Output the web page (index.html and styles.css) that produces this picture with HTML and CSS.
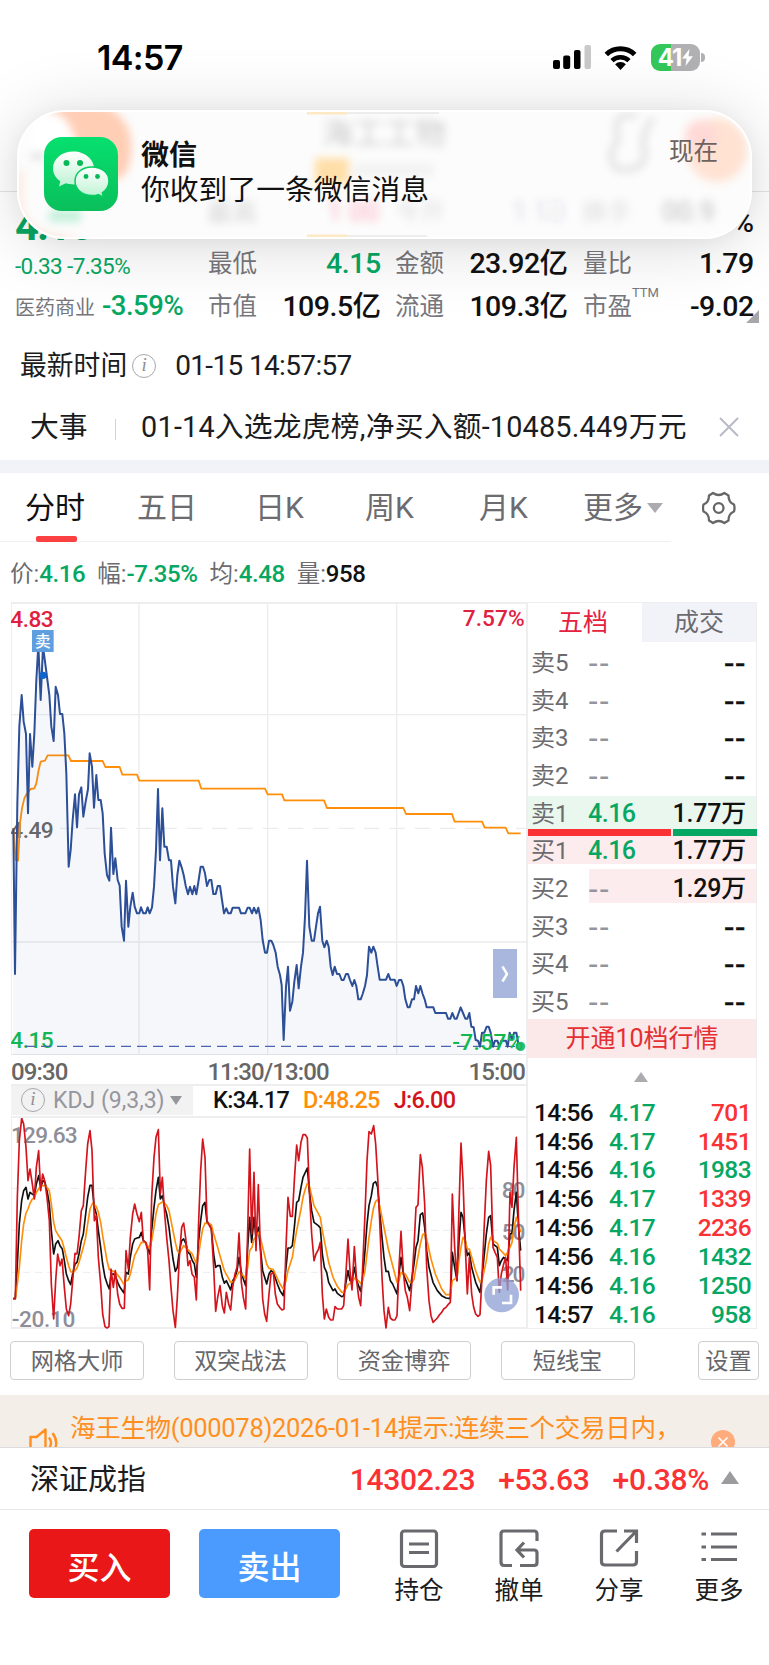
FILE: index.html
```html
<!DOCTYPE html>
<html lang="zh-CN">
    <head>
        <meta charset="UTF-8">
        <meta name="viewport" content="width=device-width, initial-scale=1.0">
        <title>海王生物 000078</title>
        <link rel="stylesheet" href="styles.css">
    </head>
    <body>
        <div class="maindiv">
            <div class="statusbar">
                <span class="clock">14:57</span>
                <svg class="signal" width="40" height="26" viewBox="0 0 40 26">
                    <rect x="1" y="16" width="7" height="9" rx="2"/>
                    <rect x="11.200" y="11.500" width="7" height="13.500" rx="2"/>
                    <rect x="22" y="6" width="6.500" height="19" rx="2"/>
                    <rect x="32.500" y="1" width="6.500" height="24" rx="2" fill="#c9c9c9"/>
                </svg>
                <svg class="wifi" width="33" height="25" viewBox="0 0 33 25">
                    <path d="M2.300 9.500a20.500 20.500 0 0 1 28.400 0" fill="none" stroke="#000" stroke-width="5"/>
                    <path d="M8 15.600a12.300 12.300 0 0 1 17 0" fill="none" stroke="#000" stroke-width="4.600"/>
                    <path d="M16.500 25l-5.400-5.700a7.700 7.700 0 0 1 10.800 0z"/>
                </svg>
                <div class="battery">
                    <span>41</span>
                    <svg width="11" height="17" viewBox="0 0 11 17"><path d="M7.500 0L0 9.500h4.600L3.500 17 11 7.300H6.500z" fill="#fff"/></svg>
                </div>
            </div>
            <div class="titlebar"></div>

            <div class="quote">
                <div class="price">4.16</div>
                <div class="cell"></div>
                <div class="cell"></div>
                <div class="cell last"><b>%</b></div>

                <div class="change">-0.33 -7.35%</div>
                <div class="cell"><label>最低</label><b class="green">4.15</b></div>
                <div class="cell"><label>金额</label><b>23.92亿</b></div>
                <div class="cell"><label>量比</label><b>1.79</b></div>

                <div class="sector">医药商业<b>-3.59%</b></div>
                <div class="cell"><label>市值</label><b>109.5亿</b></div>
                <div class="cell"><label>流通</label><b>109.3亿</b></div>
                <div class="cell"><label>市盈<sup>TTM</sup></label><b>-9.02</b></div>
                <i class="corner"></i>
            </div>

            <div class="timerow">
                <span>最新时间</span>
                <i class="info">i</i>
                <span class="stamp">01-15 14:57:57</span>
            </div>

            <div class="newsrow">
                <span>大事</span>
                <i class="bar"></i>
                <span class="newstext">01-14入选龙虎榜,净买入额-10485.449万元</span>
                <svg width="20" height="20" viewBox="0 0 20 20"><path d="M1 1l18 18M19 1L1 19" stroke="#b9bac8" stroke-width="2"/></svg>
            </div>

            <div class="tabs">
                <span class="tab active">分时</span>
                <span class="tab">五日</span>
                <span class="tab">日K</span>
                <span class="tab">周K</span>
                <span class="tab">月K</span>
                <span class="tab more">更多<i class="down"></i></span>
                <svg class="gear" width="34" height="34" viewBox="0 0 34 34" fill="none" stroke="#666" stroke-width="2.300" stroke-linejoin="round">
                    <path d="M11 2Q16.700 6 22.400 2L26.500 4.500Q26.500 11.500 32 13.500Q33 17 32 20.500Q26.500 22.500 26.500 29.500L22.400 32Q16.700 28 11 32L7 29.500Q7 22.500 1.500 20.500Q.5 17 1.500 13.500Q7 11.500 7 4.500Z"/>
                    <circle cx="16.700" cy="17" r="4.800"/>
                </svg>
            </div>

            <div class="legend">
                <span>价:<b>4.16</b></span>
                <span>幅:<b>-7.35%</b></span>
                <span>均:<b>4.48</b></span>
                <span>量:<b class="black">958</b></span>
            </div>

            <div class="board">
                <div class="charts">
                    <div class="pricechart">
                        <svg width="515" height="453" viewBox="33 36 1545 1359">
                            <g stroke="#ececee" stroke-width="4">
                                <path d="M33 374H1578M33 1056H1578M417 36V1395M803 36V1395M1190 36V1395"/>
                                <path d="M180 715H1578" stroke-dasharray="46 30"/>
                            </g>
                            <g class="axis">
                                <text x="31" y="112" fill="#e0203f" textLength="130">4.83</text>
                                <text x="1388" y="107" fill="#e0203f" textLength="186">7.57%</text>
                                <text x="31" y="743" fill="#666" textLength="130">4.49</text>
                                <text x="31" y="1374" fill="#0fb94e" textLength="130">4.15</text>
                            </g>
                            <path d="M75 1369H1562" stroke="#4a66ae" stroke-width="4" stroke-dasharray="30 18"/>
                            <path id="avg" fill="none" stroke="#ff8f0a" stroke-width="5.500" stroke-linejoin="round"/>
                            <path id="area" fill="#5575bb" fill-opacity=".06"/>
                            <path id="line" fill="none" stroke="#2c4f97" stroke-width="6" stroke-linejoin="round"/>
                            <circle cx="129" cy="256" r="11" fill="#0b66d0"/>
                            <rect x="96" y="120" width="65" height="66" fill="#5f9fe0"/>
                            <text x="105" y="171" font-size="47" fill="#fff" font-weight="500">卖</text>
                            <circle cx="1562" cy="1369" r="14" fill="#2fbf83"/>
                            <text class="axis" x="1357" y="1381" fill="#0fb94e" textLength="213">-7.57%</text>
                        </svg>
                        <div class="expand"><svg width="8" height="18" viewBox="0 0 8 18"><path d="M1.500 1.500L6 9l-4.500 7.500" fill="none" stroke="#fff" stroke-width="2.500"/></svg></div>
                    </div>
                    <div class="times"><span>09:30</span><span>11:30/13:00</span><span>15:00</span></div>
                    <div class="kdjbar">
                        <div class="kdjname"><i class="info">i</i>KDJ (9,3,3)<i class="down"></i></div>
                        <b class="black">K:34.17</b>
                        <b class="orange">D:48.25</b>
                        <b class="jred">J:6.00</b>
                    </div>
                    <div class="kdjchart">
                        <svg width="515" height="211" viewBox="33 112 1545 633">
                            <path d="M33 323H1578M33 449H1578M33 575H1578" stroke="#ececee" stroke-width="3" stroke-dasharray="22 14"/>
                            <g class="axis" fill="#8e8e99">
                                <text x="33" y="188" textLength="200">129.63</text>
                                <text x="35" y="738" textLength="191">-20.10</text>
                                <text x="1505" y="352" textLength="71">80</text>
                                <text x="1505" y="477" textLength="71">50</text>
                                <text x="1505" y="604" textLength="71">20</text>
                            </g>
                            <g fill="none" stroke-width="5" stroke-linejoin="round">
                                <path id="k" stroke="#111"/>
                                <path id="d" stroke="#ff8f0a"/>
                                <path id="j" stroke="#d4141c"/>
                            </g>
                            <circle cx="1505" cy="643" r="52" fill="#8c9fd4" fill-opacity=".75"/>
                            <path d="M1481 642v-22h25M1533 642v25h-27" fill="none" stroke="#fff" stroke-width="8"/>
                        </svg>
                    </div>
                </div>

                <div class="depth">
                    <div class="depthtabs"><span class="on">五档</span><span>成交</span></div>
                    <div class="level"><span>卖5</span><em>--</em><b class="dash">--</b></div>
                    <div class="level"><span>卖4</span><em>--</em><b class="dash">--</b></div>
                    <div class="level"><span>卖3</span><em>--</em><b class="dash">--</b></div>
                    <div class="level"><span>卖2</span><em>--</em><b class="dash">--</b></div>
                    <div class="level sell1"><span>卖1</span><em class="green">4.16</em><b>1.77万</b></div>
                    <div class="level buy1"><span>买1</span><em class="green">4.16</em><b>1.77万</b></div>
                    <div class="level buy2"><span>买2</span><em>--</em><b>1.29万</b></div>
                    <div class="level"><span>买3</span><em>--</em><b class="dash">--</b></div>
                    <div class="level"><span>买4</span><em>--</em><b class="dash">--</b></div>
                    <div class="level"><span>买5</span><em>--</em><b class="dash">--</b></div>
                    <div class="ratio"><i></i><i></i></div>
                    <div class="open10">开通10档行情</div>
                    <div class="fold"><i class="up"></i></div>
                    <div class="trades">
                        <div><span>14:56</span><em>4.17</em><b class="red">701</b></div>
                        <div><span>14:56</span><em>4.17</em><b class="red">1451</b></div>
                        <div><span>14:56</span><em>4.16</em><b>1983</b></div>
                        <div><span>14:56</span><em>4.17</em><b class="red">1339</b></div>
                        <div><span>14:56</span><em>4.17</em><b class="red">2236</b></div>
                        <div><span>14:56</span><em>4.16</em><b>1432</b></div>
                        <div><span>14:56</span><em>4.16</em><b>1250</b></div>
                        <div><span>14:57</span><em>4.16</em><b>958</b></div>
                    </div>
                </div>
            </div>

            <div class="tools">
                <span>网格大师</span>
                <span>双突战法</span>
                <span>资金博弈</span>
                <span>短线宝</span>
                <span class="set">设置</span>
            </div>

            <div class="notice">
                <svg class="horn" width="31" height="30" viewBox="0 0 31 30" fill="none" stroke="#ff8f1f" stroke-width="2.400" stroke-linejoin="round">
                    <path d="M1.500 9h6l9-7.500v27l-9-7.500h-6z"/>
                    <path d="M20 9.500q4 5.500 0 11M23.500 5q7.500 10 0 20"/>
                </svg>
                <span>海王生物(000078)2026-01-14提示:连续三个交易日内，</span>
                <svg class="close" width="24" height="24" viewBox="0 0 24 24"><circle cx="12" cy="12" r="12" fill="#ffab7c"/><path d="M7.500 7.500l9 9M16.500 7.500l-9 9" stroke="#fff" stroke-width="1.600"/></svg>
            </div>

            <div class="indexbar">
                <span>深证成指</span>
                <b class="idx">14302.23</b>
                <b class="diff">+53.63</b>
                <b class="pct">+0.38%</b>
                <i class="up"></i>
            </div>

            <div class="bottombar">
                <button class="buy">买入</button>
                <button class="sell">卖出</button>
                <div class="action">
                    <svg width="40" height="40" viewBox="0 0 40 40"><rect x="2.500" y="2" width="35" height="35.500" rx="3"/><path d="M10 15h20M10 23.500h20"/></svg>
                    <span>持仓</span>
                </div>
                <div class="action">
                    <svg width="40" height="40" viewBox="0 0 40 40"><path d="M38 12V5q0-3-3-3H5Q2 2 2 5v28q0 3.500 3 3.500h8M21 36.500h14q3 0 3-3V24q0-3-3-3H18M25 13.500L18 21l7 7.500"/></svg>
                    <span>撤单</span>
                </div>
                <div class="action">
                    <svg width="40" height="40" viewBox="0 0 40 40"><path d="M18 2H6Q2.500 2 2.500 5.500v27Q2.500 36 6 36h28q3.500 0 3.500-3.500V22M25 2h12.500v12M37 2.500L17.500 22.500"/></svg>
                    <span>分享</span>
                </div>
                <div class="action">
                    <svg width="40" height="40" viewBox="0 0 40 40"><path d="M12 5h26M12 18h26M12 30.500h26M2.500 5h4.500M2.500 18h4.500M2.500 30.500h4.500"/></svg>
                    <span>更多</span>
                </div>
            </div>

            <div class="push">
                <svg class="glass" width="735" height="129" viewBox="0 0 735 129" aria-hidden="true">
                    <defs>
                        <filter id="b3"><feGaussianBlur stdDeviation="4"/></filter>
                        <filter id="b6" x="-50%" y="-50%" width="200%" height="200%"><feGaussianBlur stdDeviation="5"/></filter>
                    </defs>
                    <g filter="url(#b3)">
                        <path d="M22-6H84q34 14 30 50q-2 26-20 26H64Q72 20 22-6z" fill="#ffceb5"/>
                        <ellipse cx="34" cy="28" rx="21" ry="25" fill="#fff"/>
                        <path d="M14 46h14" stroke="#ddd" stroke-width="6"/>
                        <text x="305" y="34" font-size="31" fill="#000" opacity=".2">海工工物</text>
                        <rect x="298" y="48" width="34" height="26" fill="#ffdfa8"/>
                        <path d="M337 60h80" stroke="#f3f3f3" stroke-width="14"/>
                        <path d="M620 6q-24-4-20 16q3 8-4 16q-6 20 10 22q22 0 22-18q-6-14 8-34" fill="none" stroke="#e2e2e2" stroke-width="6"/>
                        <text x="190" y="111" font-size="25" fill="#000" opacity=".16">最高</text>
                        <text x="310" y="111" font-size="27" fill="#f24" opacity=".3">1 00</text>
                        <text x="378" y="111" font-size="25" fill="#000" opacity=".12">今开</text>
                        <text x="495" y="111" font-size="27" fill="#447" opacity=".15">1 10</text>
                        <text x="565" y="111" font-size="25" fill="#000" opacity=".12">换手</text>
                        <text x="645" y="111" font-size="27" fill="#000" opacity=".25">00.9</text>
                        <path d="M32 106h32" stroke="#c3f0da" stroke-width="12"/>
                    </g>
                    <g filter="url(#b6)">
                        <ellipse cx="700" cy="40" rx="30" ry="32" fill="#ffe2d2"/>
                        <circle cx="684" cy="26" r="16" fill="#ffd9d6"/>
                        <path d="M2 60V100Q10 128 60 132" fill="none" stroke="#ffdccb" stroke-width="5"/>
                    </g>
                    <path d="M290 2.500h40M290 126.500h40" stroke="#ffdda0" stroke-width="4" opacity=".6"/>
                    <path d="M330 3h92M330 126h80" stroke="#ddd" stroke-width="2" opacity=".5"/>
                </svg>
                <svg class="wechat" width="74" height="74" viewBox="0 0 74 74">
                    <defs>
                        <linearGradient id="wg" x1="0" y1="0" x2="0" y2="1"><stop offset="0" stop-color="#06e06f"/><stop offset="1" stop-color="#0abf5b"/></linearGradient>
                        <linearGradient id="ww" x1="0" y1="0" x2="0" y2="1"><stop offset="0" stop-color="#fff"/><stop offset="1" stop-color="#bdf3d3"/></linearGradient>
                    </defs>
                    <rect width="74" height="74" rx="18" fill="url(#wg)"/>
                    <path d="M29.500 14.500C17.500 14.500 9 22 9 31.500c0 5.300 2.800 9.700 7.300 12.700L15 49.500l6.800-3.200c2.500.8 5 1.100 7.700 1.100C41 47.400 50 40.500 50 31.500S41 14.500 29.500 14.500z" fill="url(#ww)"/>
                    <circle cx="22.500" cy="26" r="3" fill="#07b858"/><circle cx="36" cy="26" r="3" fill="#07b858"/>
                    <path d="M48 30C38 30 31 36 31 44s7 14.500 17 14.500c2.200 0 4.300-.3 6.200-.9l5.300 2.600-1.200-4.400C62.500 53 65 49 65 44c0-8-7-14-17-14z" fill="url(#ww)" stroke="#08cb62" stroke-width="1.500"/>
                    <circle cx="42" cy="39.500" r="2.400" fill="#07b858"/><circle cx="53.500" cy="39.500" r="2.400" fill="#07b858"/>
                </svg>
                <div class="pushtext">
                    <strong>微信</strong>
                    <span>你收到了一条微信消息</span>
                </div>
                <span class="now">现在</span>
            </div>
        </div>
        <script>
            const price = '40,715 45,1152 52,640 58,410 65,315 71,395 78,432 84,670 90,432 97,530 103,430 109,270 115,165 122,330 129,170 137,230 148,315 154,410 161,453 167,290 174,315 180,372 187,372 193,430 199,550 206,830 212,780 218,690 225,613 231,712 237,613 244,592 250,680 257,635 264,597 269,490 276,530 282,653 289,555 295,630 302,630 308,670 314,790 321,855 328,872 333,713 340,852 346,805 353,870 359,887 365,1010 372,1052 378,872 385,1010 391,950 398,908 404,950 411,970 418,970 423,952 430,970 437,970 443,952 449,970 456,952 462,890 468,780 474,597 480,811 487,655 493,770 500,770 507,811 513,811 519,890 526,940 532,855 538,812 545,832 551,855 557,887 564,913 570,890 577,913 583,888 589,913 596,870 602,830 609,830 615,850 621,888 628,870 634,870 640,912 647,912 653,888 660,888 666,930 672,970 679,955 685,970 692,970 698,953 717,953 723,970 736,970 743,953 749,953 756,970 762,953 769,970 775,953 782,990 788,1050 795,1088 801,1088 807,1052 814,1052 820,1065 827,1088 833,1130 840,1155 845,1185 851,1350 858,1190 864,1130 870,1262 877,1235 883,1175 890,1125 896,1195 903,1130 909,1088 915,980 921,812 928,1010 935,1052 942,1052 948,1010 954,970 960,950 967,1052 973,1072 980,1052 986,1070 992,1130 998,1155 1004,1130 1011,1152 1018,1152 1025,1170 1031,1170 1038,1152 1044,1152 1050,1170 1057,1188 1063,1170 1069,1188 1075,1228 1082,1228 1088,1212 1095,1188 1101,1155 1107,1070 1114,1088 1120,1070 1127,1088 1133,1130 1139,1169 1158,1169 1165,1152 1171,1169 1184,1169 1190,1188 1197,1170 1204,1170 1210,1188 1216,1228 1223,1252 1229,1252 1236,1228 1242,1228 1248,1188 1255,1210 1261,1188 1268,1212 1274,1228 1280,1252 1300,1252 1306,1269 1338,1269 1344,1286 1351,1286 1357,1269 1364,1286 1370,1286 1376,1269 1382,1252 1389,1269 1396,1286 1402,1286 1408,1269 1414,1310 1421,1312 1427,1350 1434,1352 1440,1370 1446,1328 1453,1328 1460,1310 1466,1310 1472,1328 1479,1370 1485,1352 1492,1352 1498,1369 1504,1352 1518,1352 1523,1370 1529,1328 1536,1350 1542,1328 1549,1328 1555,1360 1562,1369';
            const avg = '40,715 47,810 54,812 60,700 66,655 73,625 80,612 92,597 103,595 109,580 116,540 122,515 135,512 143,496 205,496 213,513 308,513 316,531 359,531 367,554 411,554 418,572 596,572 604,596 795,596 803,613 846,613 853,631 972,631 981,654 1210,654 1218,672 1356,672 1364,695 1446,695 1454,713 1517,713 1525,730 1562,730';
            const j = '40,655 46,655 52,350 58,180 65,113 71,130 78,200 84,300 90,265 97,310 103,355 109,260 116,210 122,330 128,280 134,300 141,350 148,420 154,610 161,715 167,600 173,520 180,555 186,535 193,620 199,685 206,705 212,670 218,600 225,518 231,520 237,470 244,390 250,375 257,270 263,190 270,150 276,210 283,420 289,405 295,530 302,610 308,700 315,738 321,742 327,738 333,565 340,620 346,570 353,640 359,670 366,683 373,683 378,510 385,565 391,470 398,400 404,370 411,400 418,423 424,395 430,480 437,485 443,510 449,628 455,350 462,230 468,170 475,147 481,340 487,290 494,400 500,470 507,540 513,620 519,690 526,740 532,650 538,530 545,440 551,427 558,480 564,555 570,540 576,580 583,590 589,658 596,420 602,270 608,175 615,230 621,420 628,435 634,445 641,560 647,692 653,650 660,615 667,675 673,697 679,635 686,670 692,688 698,620 705,580 711,560 717,457 724,605 730,650 737,685 743,450 749,205 755,460 762,275 768,510 775,312 781,500 788,655 794,700 800,722 807,640 813,580 820,575 826,640 832,670 839,680 846,688 852,685 858,500 864,350 871,407 877,407 883,300 890,193 896,240 903,185 909,162 916,162 922,172 928,330 935,460 942,540 948,520 955,507 961,485 967,640 973,715 979,685 986,710 992,718 999,718 1005,678 1012,685 1025,685 1031,675 1037,590 1044,475 1050,570 1056,628 1063,498 1070,600 1076,650 1082,675 1088,560 1095,400 1101,240 1107,153 1114,160 1121,135 1127,190 1133,290 1139,420 1146,590 1152,690 1158,742 1165,680 1171,712 1178,718 1185,718 1191,705 1197,560 1203,452 1210,575 1216,630 1222,650 1229,690 1236,600 1242,500 1248,380 1254,373 1261,222 1267,260 1274,370 1280,560 1287,660 1293,705 1299,725 1306,718 1312,712 1318,703 1325,695 1331,685 1338,680 1344,672 1351,665 1357,340 1364,500 1371,600 1377,380 1383,187 1389,300 1396,500 1402,640 1408,530 1415,640 1421,680 1427,700 1434,707 1440,702 1446,590 1453,430 1459,300 1466,212 1472,255 1479,500 1485,515 1492,530 1498,635 1504,580 1511,550 1517,530 1523,628 1530,335 1536,380 1542,260 1549,170 1555,400 1562,630';
            const k = '40,655 46,650 52,550 58,430 65,360 71,330 78,320 84,355 90,335 103,345 109,310 116,285 122,320 129,300 135,305 141,330 148,370 154,450 161,520 167,490 174,480 180,495 187,505 193,540 199,580 206,600 212,612 218,580 225,550 231,545 237,520 244,480 250,460 257,400 263,350 270,314 276,314 283,380 289,400 295,450 302,500 308,550 315,590 321,608 328,625 333,580 340,580 346,585 353,605 360,620 372,637 378,575 385,580 391,530 398,490 404,475 411,472 418,470 424,455 430,480 437,485 443,500 449,520 455,450 462,380 468,330 475,290 481,355 487,345 494,380 500,400 507,440 513,490 519,535 526,572 532,560 538,510 545,480 551,475 558,490 564,515 570,520 577,540 583,550 589,590 596,480 602,420 608,375 615,365 621,425 628,430 634,445 641,520 647,560 653,555 660,555 667,590 673,608 679,600 686,615 692,628 698,600 705,590 711,570 717,530 724,575 730,595 737,615 743,500 749,410 755,485 762,410 768,470 775,440 781,500 788,570 800,610 807,580 813,570 820,575 832,610 840,630 850,645 858,560 864,502 871,502 877,495 883,440 890,365 896,360 903,320 909,290 916,275 922,262 928,330 935,390 942,425 955,435 961,442 967,520 973,560 980,575 986,605 999,630 1005,625 1012,638 1025,648 1031,645 1037,610 1044,570 1050,600 1056,600 1063,560 1070,600 1082,632 1088,590 1095,510 1101,430 1107,375 1114,345 1120,308 1127,303 1133,320 1139,390 1146,470 1152,530 1158,572 1165,572 1171,600 1178,610 1191,640 1197,580 1203,530 1210,580 1222,610 1229,630 1236,590 1242,550 1248,500 1254,480 1261,402 1268,397 1274,440 1280,510 1287,560 1299,605 1312,630 1325,645 1338,652 1351,654 1357,515 1364,560 1371,600 1377,480 1383,395 1389,410 1396,480 1402,525 1408,515 1415,560 1427,605 1440,635 1446,590 1453,520 1459,460 1466,410 1472,405 1479,490 1492,500 1498,555 1504,540 1511,530 1523,540 1530,460 1536,458 1542,390 1549,335 1555,430 1562,510';
            const d = '46,655 52,610 58,560 65,480 71,430 78,397 84,385 90,368 97,355 103,352 109,335 116,325 122,315 135,315 141,320 148,330 154,370 161,425 167,450 174,462 186,480 193,505 199,530 206,555 212,573 218,575 225,570 231,562 237,545 250,500 257,470 263,430 270,385 278,367 283,373 289,378 295,395 302,425 308,465 315,505 321,540 328,567 340,572 346,575 359,590 372,612 378,600 385,598 391,580 398,550 404,525 418,497 424,485 436,485 443,495 449,505 455,480 462,440 468,400 475,372 487,364 494,368 500,375 507,390 513,420 526,485 532,510 538,518 545,505 551,495 564,507 577,520 583,535 589,548 596,520 602,480 608,445 615,427 634,432 641,460 653,500 660,525 673,570 692,605 698,603 705,598 711,585 718,573 730,585 737,595 743,560 749,510 756,500 762,475 768,470 775,455 781,470 788,500 800,550 807,563 820,567 826,580 840,610 850,625 858,600 864,570 877,530 883,490 890,450 903,385 909,350 916,325 922,308 928,315 935,345 942,375 961,410 967,450 973,480 986,545 999,590 1012,617 1025,635 1032,635 1044,612 1056,605 1063,592 1075,600 1082,608 1088,600 1095,570 1101,520 1107,470 1114,420 1120,385 1127,362 1133,357 1139,375 1146,410 1158,470 1165,505 1178,555 1191,605 1197,600 1203,575 1216,580 1229,605 1236,605 1242,595 1248,560 1261,490 1268,462 1275,458 1280,475 1293,535 1306,580 1325,625 1338,642 1351,642 1357,600 1371,590 1377,540 1383,500 1389,470 1396,480 1402,505 1408,505 1427,570 1440,605 1446,600 1459,540 1466,490 1472,470 1479,480 1492,488 1498,505 1517,525 1530,500 1536,485 1542,440 1549,410 1555,430 1562,455';

            function draw(id, path) {
                document.getElementById(id).setAttribute('d', path);
            }

            draw('line', 'M' + price);
            draw('area', 'M' + price + ' V1395 H40 Z');
            draw('avg', 'M' + avg);
            draw('j', 'M' + j);
            draw('k', 'M' + k);
            draw('d', 'M' + d);
        </script>
    </body>
</html>
```
FILE: styles.css
```css
*{
    box-sizing: border-box;
}
body{
    margin: 0;
    font-family: Roboto, "Noto Sans CJK SC", sans-serif;
    color: #1b1c20;
    background-color: white;
}
b{
    font-weight: 500;
}
i, em{
    font-style: normal;
}
svg{
    display: block;
    flex: none;
}
.maindiv{
    position: relative;
    width: 769px;
    height: 1665px;
    overflow: hidden;
    display: flex;
    flex-direction: column;
}
.maindiv > div{
    flex: none;
}
.green{
    color: #06a763;
}
.red{
    color: #fb3234;
}
.black{
    color: #111;
}
.orange{
    color: #ff8f0a;
}
.jred{
    color: #d4141c;
}

.statusbar{
    height: 110px;
    padding: 4px 69px 0 97px;
    display: flex;
    align-items: center;
}
.clock{
    font-family: Inter, sans-serif;
    font-weight: 600;
    font-size: 34px;
    letter-spacing: -0.6px;
    color: black;
}
.signal{
    margin-left: auto;
}
.wifi{
    margin: 0 14px 0 12px;
}
.battery{
    position: relative;
    display: flex;
    align-items: center;
    justify-content: center;
    gap: 1px;
    width: 49px;
    height: 27px;
    border-radius: 9px;
    background: linear-gradient(90deg, #34c759 41%, #b1b1b3 41%);
    font-family: Inter, sans-serif;
    font-size: 24px;
    font-weight: 700;
    letter-spacing: -1.2px;
    color: white;
}
.battery::after{
    content: "";
    position: absolute;
    right: -5px;
    top: 9px;
    width: 4px;
    height: 9px;
    border-radius: 0 4px 4px 0;
    background-color: #b1b1b3;
}
.titlebar{
    height: 82px;
    border-bottom: solid 1px #e4e4e6;
}

.quote{
    position: relative;
    height: 136px;
    padding: 8px 16px 0 15px;
    display: grid;
    grid-template-columns: 193px 187px 188px 170px;
    grid-template-rows: 42px 43px 43px;
    align-items: center;
    line-height: 42px;
    white-space: nowrap;
}
.price{
    color: #06a763;
    font-weight: 700;
    font-size: 42px;
    letter-spacing: -2px;
    padding-top: 9px;
}
.change{
    color: #06a763;
    font-size: 22.5px;
    letter-spacing: -0.6px;
    padding-top: 4px;
}
.sector{
    color: #75757a;
    font-size: 20px;
}
.sector b{
    margin-left: 7px;
    font-size: 27.5px;
    letter-spacing: -0.5px;
    color: #06a763;
}
.cell{
    display: flex;
    justify-content: space-between;
    width: 172px;
}
.cell:nth-child(4n){
    width: 170px;
}
.last{
    justify-content: flex-end;
    padding-top: 4px;
}
.cell label{
    color: #77777c;
    font-size: 24.5px;
}
.cell sup{
    position: absolute;
    font-size: 13px;
    line-height: 14px;
}
.cell b{
    font-size: 28.5px;
    letter-spacing: -0.5px;
    margin-right: -0.6px;
    color: #111;
}
.cell b.green{
    color: #06a763;
}
.corner{
    position: absolute;
    right: 10px;
    bottom: 5px;
    border-left: solid 13px transparent;
    border-bottom: solid 13px #a7a7ab;
}

.timerow{
    height: 72px;
    padding: 4px 0 0 20px;
    display: flex;
    align-items: center;
    font-size: 26.8px;
    line-height: 40px;
}
.info{
    width: 24px;
    height: 24px;
    border: solid 1.5px #a8a8ac;
    border-radius: 50%;
    text-align: center;
    font: italic 19px/20px "Liberation Serif", serif;
    color: #8e8e94;
}
.timerow .info{
    margin: -1px 19px 0 5px;
}
.stamp{
    font-size: 28px;
    letter-spacing: -0.65px;
}

.newsrow{
    height: 60px;
    padding: 0 30px 7px 30px;
    display: flex;
    align-items: center;
    font-size: 28.8px;
    line-height: 40px;
    white-space: nowrap;
}
.newsrow .bar{
    width: 1.5px;
    height: 21px;
    margin: 6px 25px 0 27px;
    background-color: #d4d4d8;
}
.newsrow svg{
    margin-left: auto;
}
.newstext{
    letter-spacing: 0.2px;
}

.tabs{
    height: 82px;
    border-top: solid 13px #f2f3f9;
    display: flex;
    align-items: center;
    padding: 0 33px 0 25px;
    position: relative;
    font-size: 30px;
    line-height: 40px;
    color: #6b6b70;
    background: linear-gradient(#f0f0f2, #f0f0f2) left bottom / 671px 1.5px no-repeat;
}
.tab{
    width: 114px;
    position: relative;
}
.tab.active{
    color: #111;
}
.tab:nth-child(1){
    width: 112px;
}
.tab:nth-child(2){
    width: 118px;
}
.tab:nth-child(3){
    width: 110px;
}
.tab:nth-child(5){
    width: 104px;
}
.tab.active::after{
    content: "";
    position: absolute;
    left: 11px;
    bottom: -14px;
    width: 41px;
    height: 6px;
    border-radius: 2px;
    background-color: #fb4141;
}
.down{
    border: solid 8px transparent;
    border-top: solid 10px #acacb0;
    border-bottom: none;
}
.up{
    border: solid 8px transparent;
    border-bottom: solid 10px #acacb0;
    border-top: none;
}
.more{
    display: flex;
    align-items: center;
    gap: 4px;
}
.gear{
    margin-left: auto;
}

.legend{
    height: 60px;
    padding: 3px 0 0 10px;
    display: flex;
    align-items: center;
    gap: 12px;
    font-size: 23.5px;
    line-height: 40px;
    color: #6b6b70;
}
.legend b{
    color: #06a763;
    letter-spacing: -0.4px;
    font-size: 24px;
}
.legend b.black{
    color: #111;
}

.board{
    height: 727px;
    padding: 0 12px 0 11px;
    display: flex;
}
.charts{
    width: 517px;
    border: solid 2px #eeeef0;
    border-left: none;
    height: 727px;
    position: relative;
}
.axis, .axis text{
    font-size: 68px;
    font-weight: 500;
}
.pricechart{
    position: relative;
    height: 453px;
    margin-top: -2px;
    border-left: solid 1px #eeeef0;
    border-bottom: solid 1px #e8e8ea;
}
.pricechart svg{
    margin-left: -1px;
}
.expand{
    position: absolute;
    left: 481px;
    top: 347px;
    width: 24px;
    height: 49px;
    display: flex;
    align-items: center;
    justify-content: center;
    background-color: #a9b7df;
}
.expand svg{
    margin: 0;
}
.times{
    height: 31px;
    padding: 4px 1px 0 0;
    display: flex;
    justify-content: space-between;
    align-items: center;
    border-bottom: solid 2px #eeeef0;
    font-size: 24px;
    font-weight: 500;
    letter-spacing: -0.9px;
    color: #666;
}
.kdjbar{
    height: 32px;
    display: flex;
    align-items: center;
    gap: 14px;
    border-bottom: solid 2px #eeeef0;
    font-size: 23.5px;
    letter-spacing: -0.7px;
    padding-bottom: 2px;
    white-space: nowrap;
}
.kdjname{
    width: 182px;
    height: 29px;
    margin-right: 6px;
    padding-left: 10px;
    display: flex;
    align-items: center;
    letter-spacing: 0;
    font-size: 23px;
    background-color: #f2f2f3;
    color: #96969e;
}
.kdjname .info{
    margin-right: 8px;
}
.kdjname .down{
    border-width: 9px 6px 0;
    border-top-color: #96969a;
    margin-left: 5px;
}
.kdjchart{
    height: 211px;
    border-left: solid 1px #eeeef0;
}
.kdjchart svg{
    margin-left: -1px;
}

.depth{
    position: relative;
    width: 229px;
    height: 727px;
    border: solid 1px #eeeef0;
    border-left: none;
}
.depthtabs{
    display: flex;
    height: 39px;
    line-height: 40px;
    font-size: 25px;
    text-align: center;
    color: #6b6b70;
}
.depthtabs span{
    width: 114px;
    background-color: #f2f3f9;
}
.depthtabs .on{
    padding-right: 4px;
    background-color: white;
    color: #e5213f;
}
.level{
    height: 37.7px;
    padding: 4px 10px 0 3px;
    display: flex;
    align-items: center;
    font-size: 25px;
    line-height: 34px;
    color: #6b6b70;
}
.level span{
    width: 57px;
    font-size: 24px;
}
.level em{
    color: #94949e;
}
.level em.green{
    color: #06a763;
    font-weight: 500;
    letter-spacing: -0.5px;
}
.level b{
    margin-left: auto;
    color: #111;
    letter-spacing: -0.2px;
}
.level em:not(.green), .level b.dash{
    font-family: "Liberation Sans", sans-serif;
    font-size: 31px;
    letter-spacing: 0.7px;
}
.level b.dash{
    font-weight: 400;
    -webkit-text-stroke: 0.6px #111;
}
.sell1{
    background: linear-gradient(#e9f7ee, #e9f7ee) 0 3px no-repeat;
}
.buy1{
    background: linear-gradient(#fdeced, #fdeced) 0 0 / 100% 34px no-repeat;
}
.buy2{
    background: linear-gradient(#fdeced, #fdeced) 61px 1px / 170px 34px no-repeat;
}
.ratio{
    position: absolute;
    top: 226px;
    left: 0;
    width: 229px;
    height: 7px;
    display: flex;
    gap: 2px;
}
.ratio i{
    width: 143px;
    background-color: #fb3234;
}
.ratio i + i{
    flex: 1;
    background-color: #06a763;
}
.open10{
    height: 39px;
    line-height: 40px;
    text-align: center;
    font-size: 25px;
    color: #e52f33;
    background-color: #fbe8e9;
}
.fold{
    height: 40px;
    padding-top: 14px;
    display: flex;
    justify-content: center;
    align-items: flex-start;
}
.fold .up{
    border-width: 0 7px 10px;
    margin-right: 3px;
}
.trades div{
    height: 28.85px;
    padding: 0 5px 0 6px;
    display: flex;
    align-items: center;
    font-size: 24.5px;
    letter-spacing: -0.6px;
    font-weight: 500;
    color: #06a763;
}
.trades span{
    width: 75px;
    color: #111;
}
.trades b{
    margin-left: auto;
}
.trades .red{
    color: #fb3234;
}

.tools{
    height: 66px;
    padding: 12px 10px 0;
    display: flex;
    gap: 29.5px;
}
.tools span{
    flex: none;
    width: 134px;
    height: 39px;
    line-height: 38px;
    border: solid 1.5px #cfcfd3;
    border-radius: 4px;
    text-align: center;
    font-size: 23.2px;
    color: #67676c;
}
.tools .set{
    width: 61px;
    margin-left: auto;
}

.notice{
    height: 52px;
    padding: 13px 34px 0 29px;
    display: flex;
    overflow: hidden;
    background-color: #f3eee8;
    color: #ff8f1f;
    font-size: 25.5px;
    line-height: 40px;
    white-space: nowrap;
}
.notice span{
    margin-left: 10px;
    letter-spacing: -0.3px;
}
.horn{
    margin-top: 20px;
}
.close{
    position: absolute;
    left: 711px;
    margin-top: 22px;
}

.indexbar{
    height: 63px;
    padding: 3px 30px 0 30px;
    display: flex;
    align-items: center;
    border-top: solid 1.5px #dcdce0;
    border-bottom: solid 1.5px #e8e8ea;
    background-color: white;
    font-size: 29px;
    line-height: 40px;
    position: relative;
}
.indexbar b{
    font-size: 30px;
    letter-spacing: -0.3px;
    color: #fb3234;
}
.idx{
    margin-left: auto;
}
.diff{
    margin: 0 23px;
}
.indexbar .up{
    border-width: 0 9px 13px;
    border-bottom-color: #9c9c9f;
    margin-left: 12px;
    margin-top: -6px;
}

.bottombar{
    height: 155px;
    padding: 19px 0 0 29px;
    display: flex;
    align-items: flex-start;
}
.bottombar button{
    flex: none;
    width: 141px;
    height: 69px;
    padding: 3px 0 0;
    margin-right: 29px;
    border: none;
    border-radius: 5px;
    background-color: #ea1718;
    color: white;
    font-family: inherit;
    font-size: 32px;
    font-weight: 500;
}
.bottombar .sell{
    background-color: #4b9bff;
}
.action{
    flex: none;
    width: 100px;
    display: flex;
    flex-direction: column;
    align-items: center;
    font-size: 24.5px;
    line-height: 30px;
    color: #1b1c20;
}
.action svg{
    fill: none;
    stroke: #6a6a6e;
    stroke-width: 3.2px;
    margin-bottom: 7px;
}

/* system notification on top of the page */
.push{
    position: absolute;
    left: 17px;
    top: 110px;
    width: 735px;
    height: 129px;
    padding: 0 34px 0 27px;
    display: flex;
    align-items: center;
    border-radius: 48px;
    background-color: #fcfcfc;
    box-shadow: 0 6px 70px rgba(0,0,0,.15), 0 2px 20px rgba(0,0,0,.05);
}
.glass{
    position: absolute;
    left: 0;
    top: 0;
    border-radius: 48px;
    overflow: hidden;
}
.push::after{
    content: "";
    position: absolute;
    inset: 0;
    border-radius: 48px;
    border: solid 2px white;
}
.wechat, .pushtext, .now{
    position: relative;
}
.wechat{
    margin-top: -2px;
}
.pushtext{
    margin: -3px 0 0 23px;
    display: flex;
    flex-direction: column;
    font-size: 28.8px;
    line-height: 35px;
    color: #111;
}
.pushtext strong{
    font-size: 28px;
    font-weight: 700;
}
.now{
    margin: -50px 0 0 auto;
    font-size: 24.5px;
    color: #6f625e;
}
```
